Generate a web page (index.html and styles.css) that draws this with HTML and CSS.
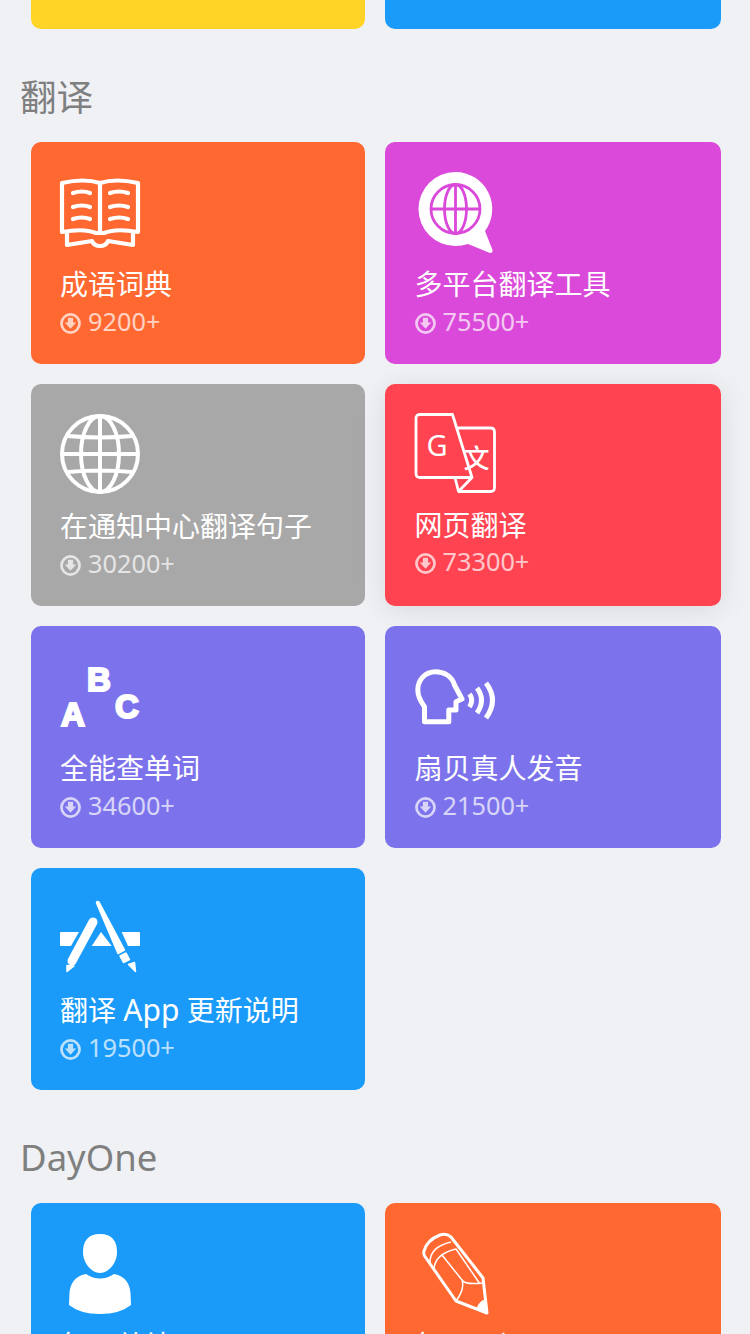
FILE: index.html
```html
<!DOCTYPE html>
<html lang="zh-CN">
<head>
    <meta charset="UTF-8">
    <meta name="viewport" content="width=device-width, initial-scale=1.0">
    <title>捷径</title>
    <link rel="stylesheet" href="styles.css">
</head>
<body>
    <svg class="defs" width="0" height="0">
        <symbol id="download" viewBox="0 0 20 20">
            <circle cx="10" cy="10" r="8.600" fill="none" stroke="#fff" stroke-width="2.600"/>
            <path d="M7.500 4.500h5v4.500h3l-5.500 6-5.500-6h3z" fill="#fff"/>
        </symbol>
    </svg>

    <div class="grid">
        <div class="card card-stub yellow"></div>
        <div class="card card-stub blue"></div>
    </div>

    <div class="section-title">翻译</div>
    <div class="grid">
        <div class="card orange">
            <svg class="icon" viewBox="0 0 80 80" fill="none" stroke="#fff" stroke-width="4.200" stroke-linejoin="round" stroke-linecap="round">
                <path d="M2 11Q24 6 40 11Q56 6 78 11V60Q56 56 44 61H36Q24 56 2 60Z"/>
                <path d="M40 11V60"/>
                <path d="M7 61V73L32 69Q34 74 40 74Q46 74 48 69L73 73V61"/>
                <path d="M13 21Q22 18 30 21M13 35Q22 32 30 35M13 47Q22 44 30 47M50 21Q59 18 68 21M50 35Q59 32 68 35M50 47Q59 44 68 47"/>
            </svg>
            <div class="card-name">成语词典</div>
            <div class="card-count"><svg class="dl"><use href="#download"/></svg>9200+</div>
        </div>
        <div class="card magenta">
            <svg class="icon" viewBox="0 0 80 80">
                <path d="M40.500 0A37 37 0 0 0 40.500 74Q47 74 53 72L75 81Q78 81 77.500 78L70 59A37 37 0 0 0 40.500 0Z" fill="#fff"/>
                <g fill="none" stroke="#da49d9" stroke-width="2.800">
                    <circle cx="40.500" cy="37" r="24.500"/>
                    <ellipse cx="40.500" cy="37" rx="11" ry="24.500"/>
                    <path d="M40.500 12.500V61.500M16 37H65"/>
                </g>
            </svg>
            <div class="card-name">多平台翻译工具</div>
            <div class="card-count"><svg class="dl"><use href="#download"/></svg>75500+</div>
        </div>
        <div class="card grey">
            <svg class="icon" viewBox="0 0 80 80" fill="none" stroke="#fff" stroke-width="4">
                <circle cx="40" cy="40" r="38"/>
                <ellipse cx="40" cy="40" rx="19" ry="38"/>
                <path d="M40 2V78M2 40H78M8 22Q40 25 72 22M8 58Q40 55 72 58"/>
            </svg>
            <div class="card-name">在通知中心翻译句子</div>
            <div class="card-count"><svg class="dl"><use href="#download"/></svg>30200+</div>
        </div>
        <div class="card red raised">
            <svg class="icon" viewBox="0 0 80 80" fill="none" stroke="#fff" stroke-width="2.800" stroke-linejoin="round">
                <path d="M5 0.500H37.500L57 63.500H5Q1 63.500 1 59.500V4.500Q1 0.500 5 0.500Z"/>
                <path d="M42 14H75.500Q79.500 14 79.500 18V73.500Q79.500 77.500 75.500 77.500H43.500L40 63.500M57 63.500L43.500 77.500"/>
                <text class="icon-g" x="11.500" y="42">G</text>
                <text class="icon-wen" x="48.500" y="54">文</text>
            </svg>
            <div class="card-name">网页翻译</div>
            <div class="card-count"><svg class="dl"><use href="#download"/></svg>73300+</div>
        </div>
        <div class="card violet">
            <svg class="icon" viewBox="0 0 80 80">
                <text class="icon-abc" x="1" y="69.500">A</text>
                <text class="icon-abc" x="27" y="35">B</text>
                <text class="icon-abc" x="55" y="62">C</text>
            </svg>
            <div class="card-name">全能查单词</div>
            <div class="card-count"><svg class="dl"><use href="#download"/></svg>34600+</div>
        </div>
        <div class="card violet">
            <svg class="icon" viewBox="0 0 80 80" fill="none" stroke="#fff" stroke-width="5" stroke-linejoin="round">
                <path d="M9.500 65.700H33.800V54H41V45.700L47 43L39.500 29C37 20 29 15.700 20.500 15.700C10 15.700 2.800 24 2.800 34C2.800 41 6 46 9.500 50.700Z"/>
                <path d="M54.500 38Q59 44 54.500 51M62 32Q71 44 62 57M71 27Q84 44 71 62"/>
            </svg>
            <div class="card-name">扇贝真人发音</div>
            <div class="card-count"><svg class="dl"><use href="#download"/></svg>21500+</div>
        </div>
        <div class="card blue">
            <svg class="icon" viewBox="0 0 80 80">
                <path d="M1 34H19L11 48H1Q0 48 0 47V35Q0 34 1 34ZM31.700 48L41 34L51.700 48ZM61.700 34H79Q80 34 80 35V47Q80 48 79 48H68Z" fill="#fff"/>
                <path d="M33 24L12 63" stroke="#fff" stroke-width="9" stroke-linecap="round"/>
                <path d="M7 67.500L14 68L7 73.500ZM37 3.500L39 4L64.500 52L58 55.500L36.500 5ZM60 58L66 55L69.500 61.500L63.500 64.500ZM68.500 66.500L74.500 64.500L75.500 73.500Z" fill="#fff" stroke="#fff" stroke-width="1.500" stroke-linejoin="round"/>
            </svg>
            <div class="card-name">翻译 <span class="latin">App</span> 更新说明</div>
            <div class="card-count"><svg class="dl"><use href="#download"/></svg>19500+</div>
        </div>
    </div>

    <div class="section-title">DayOne</div>
    <div class="grid">
        <div class="card blue">
            <svg class="icon" viewBox="0 0 80 80">
                <path d="M40 1C52 1 57 8 57 19C57 31 48 40 40 40C32 40 23 31 23 19C23 8 28 1 40 1Z" fill="#fff"/>
                <path d="M26 41Q40 50 54 41C66 43 70 52 70.500 60L71 72Q60 81 40 81Q20 81 9 72L9.500 60C10 52 14 43 26 41Z" fill="#fff"/>
            </svg>
            <div class="card-name">每日总结</div>
        </div>
        <div class="card orange">
            <svg class="icon" viewBox="0 0 80 80" fill="none" stroke="#fff" stroke-linejoin="round">
                <path d="M72 80L68 45L36 4Q31 0 25 2Q12 7 9 18Q8 22 11 25L41 68Z" stroke-width="3"/>
                <path d="M15 31Q14 14 36 9M19 36Q20 21 41 16L65 51M27 22L47 47Q50 52 68 50M47 47Q50 56 41 68" stroke-width="1.500"/>
                <path d="M62 75.500L72 80L71 67Q65 67 62 75.500Z" fill="#fff"/>
            </svg>
            <div class="card-name">每日一记</div>
        </div>
    </div>
</body>
</html>
```

FILE: styles.css
```css
html, body {
    height: 1334px;
    overflow: hidden;
}
body {
    margin: 0;
    background-color: #eff1f5;
    font-family: "Noto Sans", "Noto Sans CJK SC", sans-serif;
}
.defs {
    display: block;
    height: 0;
}
.grid {
    display: grid;
    grid-template-columns: 334.5px 336px;
    gap: 20.2px 20px;
    padding-left: 30.5px;
}
.card {
    padding: 30px 29.5px 25px;
    border-radius: 10px;
    color: white;
}
.card-stub {
    height: 28.8px;
    padding: 0;
    border-radius: 0 0 10px 10px;
}
.raised {
    box-shadow: 0 4px 30px rgba(0, 0, 0, 0.1);
}
.raised .card-name {
    margin-top: 12px;
    margin-bottom: 0;
}
.section-title {
    display: flex;
    align-items: center;
    height: 113px;
    padding: 20px 0 0 20px;
    box-sizing: border-box;
    font-size: 36.5px;
    color: #7f7f7f;
}
.icon {
    display: block;
    width: 80px;
    height: 80px;
    overflow: visible;
}
.card-name {
    margin-top: 13px;
    margin-bottom: 1px;
    font-size: 28px;
    line-height: 38px;
    white-space: nowrap;
}
.latin {
    font-size: 30px;
}
.card-count {
    display: flex;
    align-items: center;
    gap: 7px;
    font-size: 25.3px;
    line-height: 35px;
    opacity: 0.7;
}
.dl {
    width: 21px;
    height: 21px;
    margin-top: 4px;
}
.icon-g {
    font-family: "Noto Sans", sans-serif;
    font-size: 29px;
    fill: white;
    stroke: none;
}
.icon-wen {
    font-family: "Noto Sans CJK SC", sans-serif;
    font-size: 26px;
    font-weight: 500;
    fill: white;
    stroke: none;
}
.icon-abc {
    font-family: "Liberation Sans", sans-serif;
    font-size: 33px;
    font-weight: bold;
    fill: white;
    stroke: white;
    stroke-width: 2.2px;
}
.yellow { background: #ffd426; }
.blue { background: #1a9bfa; }
.orange { background: #ff6831; }
.magenta { background: #da49d9; }
.grey { background: #a8a8a8; }
.red { background: #ff4350; }
.violet { background: #7c73ec; }
```
